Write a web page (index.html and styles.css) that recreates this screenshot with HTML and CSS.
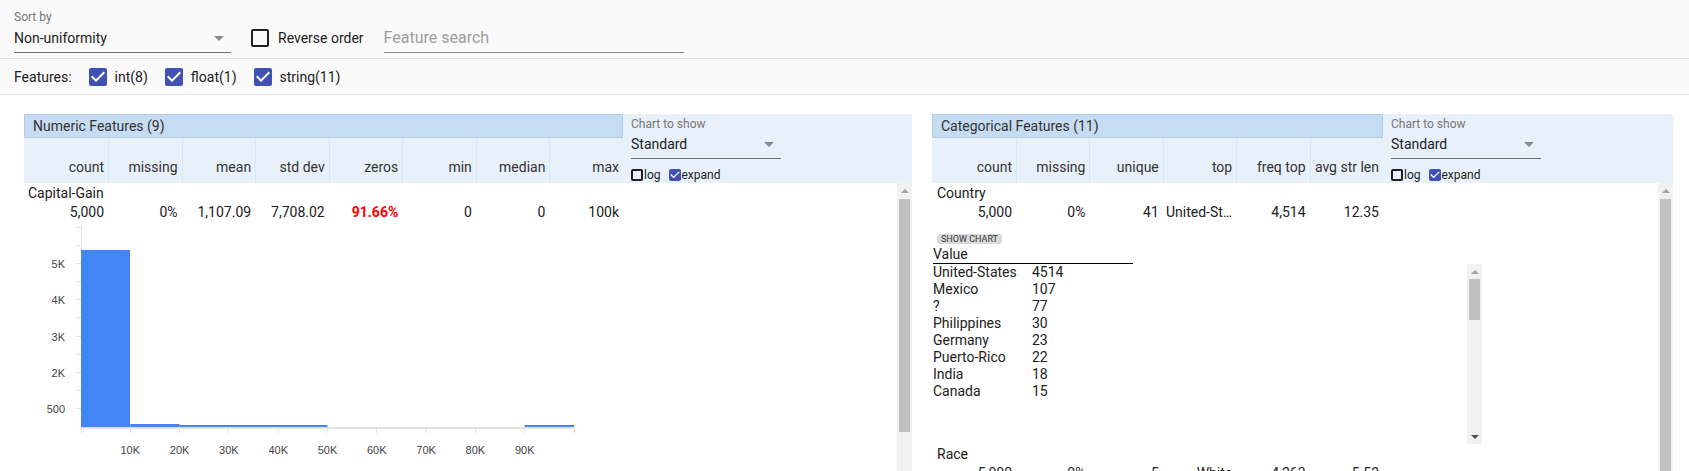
FILE: index.html
```html
<!DOCTYPE html>
<html>
<head>
<meta charset="utf-8">
<link rel="stylesheet" href="styles.css">
</head>
<body>
<div class="toolbar">
  <div class="sortby">
    <div class="field-label">Sort by</div>
    <div class="select"><span>Non-uniformity</span><span class="caret"></span></div>
  </div>
  <div class="cb cb-lg reverse"><span class="box"></span><span>Reverse order</span></div>
  <div class="search">Feature search</div>
</div>
<div class="featbar">
  <span class="feat-label">Features:</span>
  <span class="cb cb-lg"><span class="box on"><svg viewBox="3 3 18 18"><path d="M10 17l-5-5 1.41-1.41L10 14.17l7.59-7.59L19 8l-9 9z" fill="#fff"/></svg></span><span>int(8)</span></span>
  <span class="cb cb-lg"><span class="box on"><svg viewBox="3 3 18 18"><path d="M10 17l-5-5 1.41-1.41L10 14.17l7.59-7.59L19 8l-9 9z" fill="#fff"/></svg></span><span>float(1)</span></span>
  <span class="cb cb-lg"><span class="box on"><svg viewBox="3 3 18 18"><path d="M10 17l-5-5 1.41-1.41L10 14.17l7.59-7.59L19 8l-9 9z" fill="#fff"/></svg></span><span>string(11)</span></span>
</div>
<div class="main">
  <section class="panel panel-num">
    <div class="phead">
      <div class="thead thead-num">
        <div class="ptitle">Numeric Features (9)</div>
        <div class="cols grid-num">
          <div>count</div><div>missing</div><div>mean</div><div>std dev</div><div>zeros</div><div>min</div><div>median</div><div>max</div>
        </div>
      </div>
      <div class="chartbox">
        <div class="field-label">Chart to show</div>
        <div class="select select-sm"><span>Standard</span><span class="caret"></span></div>
        <div class="opts">
          <span class="cb cb-sm"><span class="box"></span><span>log</span></span>
          <span class="cb cb-sm"><span class="box on"><svg viewBox="3 3 18 18"><path d="M10 17l-5-5 1.41-1.41L10 14.17l7.59-7.59L19 8l-9 9z" fill="#fff"/></svg></span><span>expand</span></span>
        </div>
      </div>
    </div>
    <div class="pbody">
      <div class="pcontent">
        <div class="fname">Capital-Gain</div>
        <div class="vals grid-num thead-num">
          <div>5,000</div><div>0%</div><div>1,107.09</div><div>7,708.02</div><div class="warn">91.66%</div><div>0</div><div>0</div><div>100k</div>
        </div>
        <svg class="hist" width="560" height="249" viewBox="0 0 560 249">
          <g stroke="#e3e3e3" stroke-width="1">
            <line x1="57.5" y1="5" x2="57.5" y2="205"/>
            <line x1="52" y1="5.5" x2="57" y2="5.5"/>
            <line x1="52" y1="23.5" x2="57" y2="23.5"/>
            <line x1="52" y1="41.5" x2="57" y2="41.5"/>
            <line x1="52" y1="59.5" x2="57" y2="59.5"/>
            <line x1="52" y1="77.5" x2="57" y2="77.5"/>
            <line x1="52" y1="95.5" x2="57" y2="95.5"/>
            <line x1="52" y1="114.5" x2="57" y2="114.5"/>
            <line x1="52" y1="132.5" x2="57" y2="132.5"/>
            <line x1="52" y1="150.5" x2="57" y2="150.5"/>
            <line x1="52" y1="168.5" x2="57" y2="168.5"/>
            <line x1="52" y1="186.5" x2="57" y2="186.5"/>
            <line x1="57.5" y1="205" x2="57.5" y2="211"/>
            <line x1="106.5" y1="205" x2="106.5" y2="211"/>
            <line x1="155.5" y1="205" x2="155.5" y2="211"/>
            <line x1="204.5" y1="205" x2="204.5" y2="211"/>
            <line x1="254.5" y1="205" x2="254.5" y2="211"/>
            <line x1="303.5" y1="205" x2="303.5" y2="211"/>
            <line x1="352.5" y1="205" x2="352.5" y2="211"/>
            <line x1="402.5" y1="205" x2="402.5" y2="211"/>
            <line x1="451.5" y1="205" x2="451.5" y2="211"/>
            <line x1="500.5" y1="205" x2="500.5" y2="211"/>
            <line x1="550.5" y1="205" x2="550.5" y2="211"/>
          </g>
          <rect x="57" y="205" width="493" height="2" fill="#e3e3e3"/>
          <g fill="#4285f4">
            <rect x="57" y="28" width="49" height="177"/>
            <rect x="106.3" y="202" width="49.3" height="3"/>
            <rect x="155.6" y="203" width="147.9" height="2"/>
            <rect x="500.7" y="203" width="49.3" height="2"/>
          </g>
          <g class="ylab" text-anchor="end">
            <text x="41" y="46">5K</text>
            <text x="41" y="82">4K</text>
            <text x="41" y="119">3K</text>
            <text x="41" y="155">2K</text>
            <text x="41" y="191">500</text>
          </g>
          <g class="xlab" text-anchor="middle">
            <text x="106.3" y="232">10K</text>
            <text x="155.6" y="232">20K</text>
            <text x="204.9" y="232">30K</text>
            <text x="254.2" y="232">40K</text>
            <text x="303.5" y="232">50K</text>
            <text x="352.8" y="232">60K</text>
            <text x="402.1" y="232">70K</text>
            <text x="451.4" y="232">80K</text>
            <text x="500.7" y="232">90K</text>
          </g>
        </svg>
      </div>
      <div class="vscroll">
        <div class="sbtn"><span class="arrow-up"></span></div>
        <div class="thumb thumb-num"></div>
      </div>
    </div>
  </section>

  <section class="panel panel-cat">
    <div class="phead">
      <div class="thead thead-cat">
        <div class="ptitle">Categorical Features (11)</div>
        <div class="cols grid-cat">
          <div>count</div><div>missing</div><div>unique</div><div>top</div><div>freq top</div><div>avg str len</div>
        </div>
      </div>
      <div class="chartbox">
        <div class="field-label">Chart to show</div>
        <div class="select select-sm"><span>Standard</span><span class="caret"></span></div>
        <div class="opts">
          <span class="cb cb-sm"><span class="box"></span><span>log</span></span>
          <span class="cb cb-sm"><span class="box on"><svg viewBox="3 3 18 18"><path d="M10 17l-5-5 1.41-1.41L10 14.17l7.59-7.59L19 8l-9 9z" fill="#fff"/></svg></span><span>expand</span></span>
        </div>
      </div>
    </div>
    <div class="pbody">
      <div class="pcontent">
        <div class="fname cat">Country</div>
        <div class="vals grid-cat thead-cat">
          <div>5,000</div><div>0%</div><div>41</div><div>United-St…</div><div>4,514</div><div>12.35</div>
        </div>
        <div class="showchart">SHOW CHART</div>
        <div class="vhead">Value</div>
        <div class="vlist">
          <div class="vrows">
            <div class="vrow"><span>United-States</span><span>4514</span></div>
            <div class="vrow"><span>Mexico</span><span>107</span></div>
            <div class="vrow"><span>?</span><span>77</span></div>
            <div class="vrow"><span>Philippines</span><span>30</span></div>
            <div class="vrow"><span>Germany</span><span>23</span></div>
            <div class="vrow"><span>Puerto-Rico</span><span>22</span></div>
            <div class="vrow"><span>India</span><span>18</span></div>
            <div class="vrow"><span>Canada</span><span>15</span></div>
          </div>
          <div class="vscroll">
            <div class="sbtn"><span class="arrow-up"></span></div>
            <div class="thumb thumb-list"></div>
            <div class="sfill"></div>
            <div class="sbtn"><span class="arrow-down"></span></div>
          </div>
        </div>
        <div class="fname cat">Race</div>
        <div class="vals grid-cat thead-cat">
          <div>5,000</div><div>0%</div><div>5</div><div>White</div><div>4,263</div><div>5.52</div>
        </div>
      </div>
      <div class="vscroll">
        <div class="sbtn"><span class="arrow-up"></span></div>
        <div class="thumb thumb-cat"></div>
      </div>
    </div>
  </section>
</div>
</body>
</html>
```

FILE: styles.css
```css
html, body {
  margin: 0;
  padding: 0;
  overflow: hidden;
}
body {
  width: 1689px;
  height: 471px;
  background: #fff;
  font-family: Roboto, "Noto Sans", sans-serif;
  font-size: 14px;
  color: #212121;
}

/* top toolbar */
.toolbar {
  height: 59px;
  box-sizing: border-box;
  border-bottom: 1px solid #e0e0e0;
  background: #fafafa;
  display: flex;
  align-items: flex-start;
  padding-left: 14px;
}
.sortby {
  width: 217px;
  margin-top: 10px;
}
.field-label {
  font-size: 12px;
  line-height: 14px;
  color: #757575;
}
.select {
  display: flex;
  justify-content: space-between;
  align-items: center;
  font-size: 14px;
  line-height: 20px;
  padding: 4px 0;
  border-bottom: 1px solid #737373;
  color: #212121;
}
.caret {
  width: 0;
  height: 0;
  border-left: 5px solid transparent;
  border-right: 5px solid transparent;
  border-top: 5px solid #8a8a8a;
  margin-right: 7px;
}
.cb {
  display: flex;
  align-items: center;
}
.cb .box {
  box-sizing: border-box;
  border: 2px solid #212121;
  border-radius: 2px;
  display: flex;
}
.cb .box.on {
  border: none;
  background: #3f51b5;
}
.cb .box svg {
  width: 100%;
  height: 100%;
}
.cb-lg .box {
  width: 18px;
  height: 18px;
  margin-right: 8px;
}
.cb-lg {
  line-height: 18px;
}
.reverse {
  margin-left: 20px;
  margin-top: 29px;
}
.reverse .box {
  margin-right: 9px;
}
.search {
  margin-left: 20px;
  margin-top: 28px;
  width: 300px;
  font-size: 16px;
  line-height: 20px;
  padding-bottom: 4px;
  border-bottom: 1px solid #8a8a8a;
  color: #9e9e9e;
}

/* features bar */
.featbar {
  height: 36px;
  box-sizing: border-box;
  border-bottom: 1px solid #e0e0e0;
  background: #fafafa;
  display: flex;
  align-items: center;
  padding-left: 14px;
}
.featbar .cb {
  margin-left: 17px;
}

/* panels */
.main {
  display: flex;
  gap: 20px;
  padding: 19px 0 0 24px;
}
.panel-num { width: 888px; }
.panel-cat { width: 741px; }
.phead {
  display: flex;
}
.thead-num { width: 599px; }
.thead-cat { width: 451px; }
.ptitle {
  height: 24px;
  box-sizing: border-box;
  border: 1px solid #b4cde6;
  background: #c6dcf2;
  padding-left: 8px;
  line-height: 22px;
  color: #333;
}
.grid-num {
  display: grid;
  grid-template-columns: 84px repeat(7, 1fr);
}
.grid-cat {
  display: grid;
  grid-template-columns: 84px repeat(5, 1fr);
}
.cols {
  height: 45px;
  background: #e8f1fa;
}
.cols > div {
  display: flex;
  align-items: flex-end;
  justify-content: flex-end;
  padding: 0 4px 7px 0;
  line-height: 17px;
  color: #333;
  white-space: nowrap;
}
.cols > div + div {
  border-left: 1px solid #d9e6f3;
}
.chartbox {
  flex: 1;
  height: 69px;
  box-sizing: border-box;
  background: #e8f1fa;
  padding: 3px 8px 0;
}
.select-sm {
  width: 150px;
  padding-top: 3px;
}
.opts {
  display: flex;
  margin-top: 9px;
  font-size: 12px;
  line-height: 14px;
  color: #212121;
}
.cb-sm .box {
  width: 12px;
  height: 12px;
  margin-right: 1px;
}
.cb-sm + .cb-sm {
  margin-left: 8px;
}

.pbody {
  display: flex;
  height: 300px;
  overflow: hidden;
}
.pcontent {
  flex: 1;
  min-width: 0;
}
.fname {
  padding: 2px 0 0 4px;
  line-height: 17px;
}
.fname.cat {
  padding-left: 5px;
}
.vals {
  margin-top: 2px;
  line-height: 17px;
}
.vals > div {
  text-align: right;
  padding-right: 4px;
  white-space: nowrap;
}
.warn {
  color: #f00;
  font-weight: 700;
}
.hist {
  display: block;
  margin-top: 1px;
}
.hist text {
  font-family: "Liberation Sans", Arial, sans-serif;
  font-size: 11px;
  fill: #444;
}

/* scrollbars */
.vscroll {
  width: 15px;
  background: #f1f1f1;
  display: flex;
  flex-direction: column;
  flex: none;
}
.sbtn {
  height: 15px;
  flex: none;
  display: flex;
  align-items: center;
  justify-content: center;
}
.arrow-up {
  width: 0;
  height: 0;
  border-left: 4px solid transparent;
  border-right: 4px solid transparent;
  border-bottom: 4px solid #a3a3a3;
}
.arrow-down {
  width: 0;
  height: 0;
  border-left: 4px solid transparent;
  border-right: 4px solid transparent;
  border-top: 4px solid #505050;
}
.thumb {
  margin: 1px 2px 0;
  background: #c1c1c1;
  flex: none;
}
.thumb-num { height: 233px; }
.thumb-cat { height: 400px; }
.thumb-list { height: 41px; margin-top: 0; }
.sfill { flex: 1; }

/* categorical details */
.showchart {
  display: inline-block;
  margin: 13px 0 0 5px;
  padding: 0 4px;
  font-size: 9px;
  line-height: 10px;
  background: #d9d9d9;
  border-radius: 3px;
  color: #3a3a3a;
}
.vhead {
  width: 200px;
  margin: 1px 0 0 1px;
  line-height: 17px;
  border-bottom: 1px solid #000;
}
.vlist {
  display: flex;
  width: 549px;
  height: 180px;
  margin-left: 1px;
}
.vrows {
  flex: 1;
}
.vrow {
  display: flex;
  line-height: 17px;
}
.vrow span:first-child {
  width: 99px;
}
```
